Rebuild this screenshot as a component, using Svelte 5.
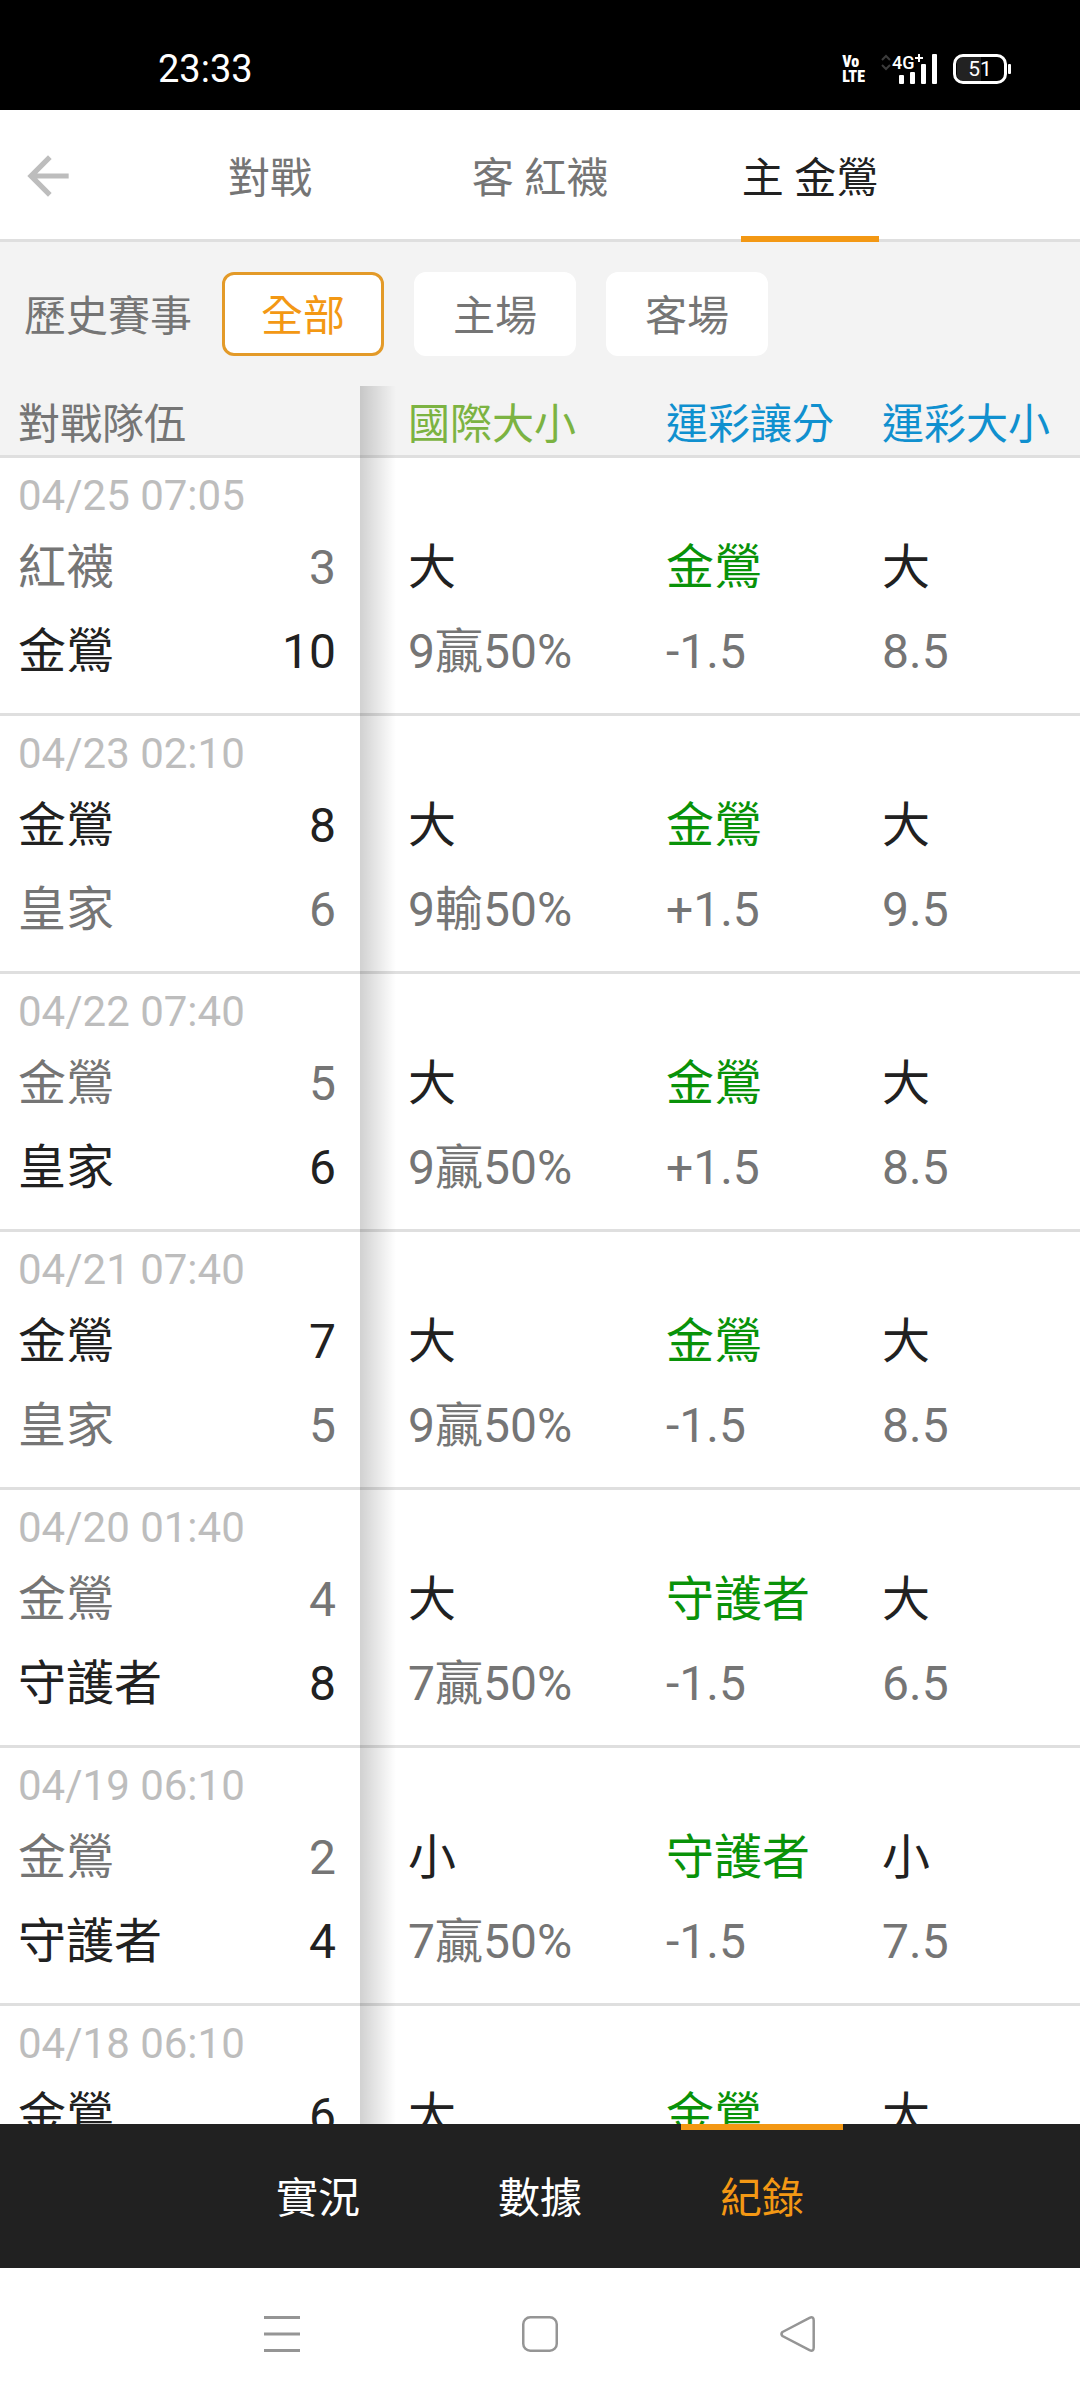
<script>
  const tabs = ['對戰', '客 紅襪', '主 金鶯'];
  const filters = ['全部', '主場', '客場'];
  const sections = ['實況', '數據', '紀錄'];

  let tab = '主 金鶯';
  let filter = '全部';
  let section = '紀錄';

  const games = [
    { date: '04/25 07:05', away: '紅襪', awayScore: 3, home: '金鶯', homeScore: 10, intl: '大', intlOdds: '9贏50%', spread: '金鶯', spreadOdds: '-1.5', total: '大', totalOdds: '8.5' },
    { date: '04/23 02:10', away: '金鶯', awayScore: 8, home: '皇家', homeScore: 6, intl: '大', intlOdds: '9輸50%', spread: '金鶯', spreadOdds: '+1.5', total: '大', totalOdds: '9.5' },
    { date: '04/22 07:40', away: '金鶯', awayScore: 5, home: '皇家', homeScore: 6, intl: '大', intlOdds: '9贏50%', spread: '金鶯', spreadOdds: '+1.5', total: '大', totalOdds: '8.5' },
    { date: '04/21 07:40', away: '金鶯', awayScore: 7, home: '皇家', homeScore: 5, intl: '大', intlOdds: '9贏50%', spread: '金鶯', spreadOdds: '-1.5', total: '大', totalOdds: '8.5' },
    { date: '04/20 01:40', away: '金鶯', awayScore: 4, home: '守護者', homeScore: 8, intl: '大', intlOdds: '7贏50%', spread: '守護者', spreadOdds: '-1.5', total: '大', totalOdds: '6.5' },
    { date: '04/19 06:10', away: '金鶯', awayScore: 2, home: '守護者', homeScore: 4, intl: '小', intlOdds: '7贏50%', spread: '守護者', spreadOdds: '-1.5', total: '小', totalOdds: '7.5' },
    { date: '04/18 06:10', away: '金鶯', awayScore: 6, home: '守護者', homeScore: 4, intl: '大', intlOdds: '7贏50%', spread: '金鶯', spreadOdds: '-1.5', total: '大', totalOdds: '7.5' }
  ];
</script>

<div class="screen">
  <div class="status">
    <span class="clock">23:33</span>
    <div class="status-icons">
      <span class="volte"><span>Vo</span><span>LTE</span></span>
      <svg width="56" height="32" viewBox="0 0 56 32">
        <path d="M1 7l4-4 4 4M1 12l4 4 4-4" fill="none" stroke="#3c3c3c" stroke-width="2" />
        <text x="11" y="16" class="network">4G</text>
        <path d="M38 1v8M34 5h8" stroke="#fff" stroke-width="2" />
        <rect x="18" y="22" width="5" height="9" rx="1" fill="#fff" />
        <rect x="29" y="19" width="5" height="12" rx="1" fill="#fff" />
        <rect x="40" y="11" width="5" height="20" rx="1" fill="#fff" />
        <rect x="51" y="1" width="5" height="30" rx="1" fill="#fff" />
      </svg>
      <svg width="59" height="32" viewBox="0 0 59 32">
        <path d="M10 4h18v24H10a6 6 0 0 1-6-6V10a6 6 0 0 1 6-6z" fill="#222" />
        <rect x="1.5" y="2.5" width="51" height="27" rx="8.5" fill="none" stroke="#fff" stroke-width="3" />
        <rect x="55" y="11" width="3" height="10" rx="1" fill="#fff" />
        <text x="27" y="23" text-anchor="middle" class="battery">51</text>
      </svg>
    </div>
  </div>

  <header>
    <button class="back" type="button" aria-label="返回">
      <svg width="62" height="62" viewBox="0 0 24 24">
        <path d="M20 11H7.83l5.59-5.59L12 4l-8 8 8 8 1.41-1.41L7.83 13H20v-2z" fill="#bdbdbd" />
      </svg>
    </button>
    <nav class="tabs">
      {#each tabs as name}
        <button type="button" on:click={() => (tab = name)}>
          <span class:active={tab === name}>{name}</span>
        </button>
      {/each}
    </nav>
  </header>

  <div class="filters">
    <span>歷史賽事</span>
    {#each filters as name}
      <button type="button" class:active={filter === name} on:click={() => (filter = name)}>{name}</button>
    {/each}
  </div>

  <main>
    <table>
      <colgroup>
        <col class="col-teams" />
        <col class="col-intl" />
        <col class="col-spread" />
        <col />
      </colgroup>
      <thead>
        <tr>
          <th>對戰隊伍</th>
          <th class="intl">國際大小</th>
          <th class="lottery">運彩讓分</th>
          <th class="lottery">運彩大小</th>
        </tr>
      </thead>
      <tbody>
        {#each games as g}
          <tr>
            <td>
              <div class="date">{g.date}</div>
              <div class="team" class:winner={g.awayScore > g.homeScore}>
                <span>{g.away}</span><span>{g.awayScore}</span>
              </div>
              <div class="team" class:winner={g.homeScore > g.awayScore}>
                <span>{g.home}</span><span>{g.homeScore}</span>
              </div>
            </td>
            <td class="intl">
              <div class="result">{g.intl}</div>
              <div>{g.intlOdds}</div>
            </td>
            <td>
              <div class="result covered">{g.spread}</div>
              <div>{g.spreadOdds}</div>
            </td>
            <td>
              <div class="result">{g.total}</div>
              <div>{g.totalOdds}</div>
            </td>
          </tr>
        {/each}
      </tbody>
    </table>
    <div class="shadow"></div>
  </main>

  <nav class="sections">
    {#each sections as name}
      <button type="button" class:active={section === name} on:click={() => (section = name)}>{name}</button>
    {/each}
  </nav>

  <div class="system">
    <svg width="36" height="36" viewBox="0 0 36 36">
      <path d="M0 1.5h36M0 18h36M0 34.5h36" stroke="#959595" stroke-width="3" />
    </svg>
    <svg width="36" height="36" viewBox="0 0 36 36">
      <rect x="1.25" y="1.25" width="33.5" height="33.5" rx="7" fill="none" stroke="#959595" stroke-width="2.5" />
    </svg>
    <svg width="36" height="36" viewBox="0 0 36 36">
      <path d="M2.5 16 29.5 1.8Q33.7 0 33.7 4.5V31.5Q33.7 36 29.5 34.2L2.5 20Q.5 18 2.5 16z" fill="none" stroke="#959595" stroke-width="2.5" />
    </svg>
  </div>
</div>

<style>
  :global(body) {
    background: #fff;
  }

  .screen {
    display: flex;
    flex-direction: column;
    height: 100vh;
    font-family: Roboto, "Noto Sans CJK TC", sans-serif;
    font-size: 42px;
    line-height: 60px;
    color: #757575;
  }

  button {
    margin: 0;
    padding: 0;
    border: 0;
    background: none;
    font: inherit;
    color: inherit;
  }

  svg {
    display: block;
  }

  .status {
    display: flex;
    align-items: center;
    justify-content: space-between;
    box-sizing: border-box;
    height: 110px;
    padding: 28px 68px 0 158px;
    background: #000;
    color: #fff;
  }

  .clock {
    font-size: 38px;
  }

  .status-icons {
    display: flex;
    align-items: center;
    gap: 16px;
  }

  .volte {
    display: flex;
    flex-direction: column;
    font-family: "Roboto Condensed", "Liberation Sans Narrow", Roboto, sans-serif;
    font-size: 16px;
    font-weight: 900;
    line-height: 15px;
  }

  .network {
    font-size: 18px;
    font-weight: 500;
    fill: #fff;
  }

  .battery {
    font-size: 21px;
    fill: #fff;
  }

  header {
    display: grid;
    grid-template-columns: 1fr 6fr 1fr;
    height: 129px;
    border-bottom: 3px solid #dfdfdf;
  }

  .back {
    padding-left: 17px;
  }

  .tabs {
    display: grid;
    grid-template-columns: repeat(3, 1fr);
    justify-items: center;
    height: 132px;
  }

  .tabs button {
    display: flex;
  }

  .tabs span {
    padding: 39px 1px 27px;
    border-bottom: 6px solid transparent;
  }

  .tabs .active {
    border-color: #f39814;
    color: #212121;
  }

  .filters {
    display: flex;
    align-items: center;
    gap: 30px;
    padding: 30px 24px;
    background: #f3f3f3;
  }

  .filters span {
    padding-top: 6px;
  }

  .filters button {
    width: 162px;
    height: 84px;
    padding-top: 6px;
    border: 3px solid #fff;
    border-radius: 12px;
    background: #fff;
  }

  .filters .active {
    border-color: #e39a28;
    color: #f39814;
  }

  main {
    position: relative;
    flex: 1;
    min-height: 0;
    overflow: hidden;
  }

  table {
    width: 100%;
    table-layout: fixed;
    border-spacing: 0;
  }

  .col-teams {
    width: 360px;
  }

  .col-intl {
    width: 306px;
  }

  .col-spread {
    width: 216px;
  }

  th {
    padding: 9px 0 0;
    border-bottom: 3px solid #dfdfdf;
    background: #f3f3f3;
    font-weight: 400;
    text-align: left;
    white-space: nowrap;
  }

  td {
    padding: 8px 0 19px;
    border-bottom: 3px solid #dfdfdf;
    font-size: 48px;
    line-height: 84px;
    vertical-align: bottom;
    white-space: nowrap;
  }

  th:first-child,
  td:first-child {
    padding-left: 18px;
    padding-right: 24px;
  }

  .intl {
    padding-left: 48px;
  }

  th.intl {
    color: #7cb342;
  }

  .lottery {
    color: #1090cf;
  }

  .date {
    font-size: 42px;
    line-height: 60px;
    color: #bdbdbd;
  }

  .team {
    display: flex;
    justify-content: space-between;
  }

  .winner,
  .result {
    color: #212121;
  }

  .covered {
    color: #099209;
  }

  .shadow {
    position: absolute;
    top: 0;
    bottom: 0;
    left: 360px;
    width: 36px;
    background: linear-gradient(to right, rgba(0, 0, 0, 0.18), rgba(0, 0, 0, 0));
  }

  .sections {
    display: flex;
    justify-content: center;
    gap: 60px;
    background: #212121;
    color: #fff;
  }

  .sections button {
    width: 162px;
    height: 144px;
    padding-top: 6px;
    border-top: 6px solid transparent;
    border-bottom: 6px solid transparent;
  }

  .sections .active {
    border-top-color: #f39814;
    color: #f39814;
  }

  .system {
    display: flex;
    align-items: center;
    justify-content: center;
    gap: 222px;
    height: 132px;
  }
</style>
